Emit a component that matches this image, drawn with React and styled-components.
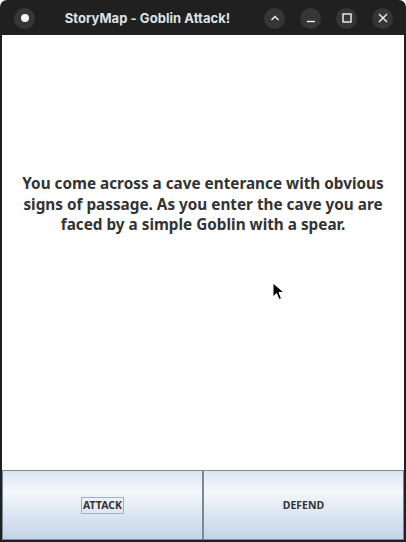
import React from "react";
import styled, { createGlobalStyle } from "styled-components";

const Global = createGlobalStyle`
  html, body { margin: 0; padding: 0; background: #ffffff; }
  body { width: 406px; height: 542px; overflow: hidden; }
  #root { width: 406px; height: 542px; }
  * { box-sizing: border-box; }
`;

const Frame = styled.div`
  position: relative;
  width: 406px;
  height: 542px;
  background: #202020;
  border-radius: 7px 7px 0 0;
  display: flex;
  flex-direction: column;
  padding: 0 2px 2px 2px;
`;

const TitleBar = styled.div`
  height: 35px;
  display: flex;
  align-items: center;
  padding: 0 0 0 12px;
`;

const CircleBtn = styled.div`
  width: 21px;
  height: 21px;
  border-radius: 50%;
  background: #363636;
  display: flex;
  align-items: center;
  justify-content: center;
  flex-shrink: 0;
  margin-top: 1px;
`;

const Dot = styled.div`
  width: 8px;
  height: 8px;
  border-radius: 50%;
  background: #f4f4f4;
`;

const Title = styled.div`
  flex: 1;
  text-align: center;
  font-family: Inter, "Noto Sans", sans-serif;
  font-weight: 700;
  font-size: 13px;
  color: #dde2e8;
  padding-right: 4px;
  letter-spacing: 0.05px;
`;

const Controls = styled.div`
  display: flex;
  gap: 15px;
  padding-right: 11px;
`;

const Content = styled.div`
  flex: 1;
  background: #ffffff;
  display: flex;
  flex-direction: column;
`;

const Story = styled.div`
  flex: 1;
  padding: 138px 8px 0 8px;
  text-align: center;
  font-family: "Noto Sans", "Open Sans", sans-serif;
  font-weight: 700;
  font-size: 15.3px;
  line-height: 20.5px;
  color: #333333;
`;

const ButtonRow = styled.div`
  height: 70px;
  display: flex;
`;

const ActionButton = styled.div`
  flex: 1;
  border: 1px solid #7a8899;
  background: linear-gradient(
    to bottom,
    #dbe5f1 0%,
    #f5f8fc 30%,
    #e2eaf4 55%,
    #c4d4e6 100%
  );
  display: flex;
  align-items: center;
  justify-content: center;
  font-family: "Noto Sans", "Open Sans", sans-serif;
  font-weight: 700;
  font-size: 10.5px;
  color: #333333;
`;

const Label = styled.span`
  padding: 1px 1px;
  border: 1px solid ${(p) => (p.focused ? "#9db2ca" : "transparent")};
  line-height: 13px;
`;

const Pointer = styled.svg`
  position: absolute;
  left: 272px;
  top: 282px;
`;

const Icon = ({ children }) => (
  <svg width="12" height="12" viewBox="0 0 12 12" fill="none" stroke="#f2f2f2" strokeWidth="1.4">
    {children}
  </svg>
);

export default function App() {
  return (
    <>
      <Global />
      <Frame>
        <TitleBar>
          <CircleBtn>
            <Dot />
          </CircleBtn>
          <Title>StoryMap - Goblin Attack!</Title>
          <Controls>
            <CircleBtn>
              <Icon>
                <path d="M2.5 8 L6 4.5 L9.5 8" />
              </Icon>
            </CircleBtn>
            <CircleBtn>
              <Icon>
                <path d="M2 9.5 H10" />
              </Icon>
            </CircleBtn>
            <CircleBtn>
              <Icon>
                <rect x="2" y="2" width="8" height="8" />
              </Icon>
            </CircleBtn>
            <CircleBtn>
              <Icon>
                <path d="M2 2 L10 10 M10 2 L2 10" />
              </Icon>
            </CircleBtn>
          </Controls>
        </TitleBar>
        <Content>
          <Story>
            You come across a cave enterance with obvious signs of passage. As you enter the cave you are faced by a simple Goblin with a spear.
          </Story>
          <ButtonRow>
            <ActionButton>
              <Label focused>ATTACK</Label>
            </ActionButton>
            <ActionButton>
              <Label>DEFEND</Label>
            </ActionButton>
          </ButtonRow>
        </Content>
        <Pointer width="14" height="20" viewBox="0 0 14 20">
          <path d="M1 1 L1 15 L4.5 11.5 L7 17.5 L9.5 16.5 L7 10.5 L12 10.5 Z" fill="#000" stroke="#fff" strokeWidth="1" />
        </Pointer>
      </Frame>
    </>
  );
}
